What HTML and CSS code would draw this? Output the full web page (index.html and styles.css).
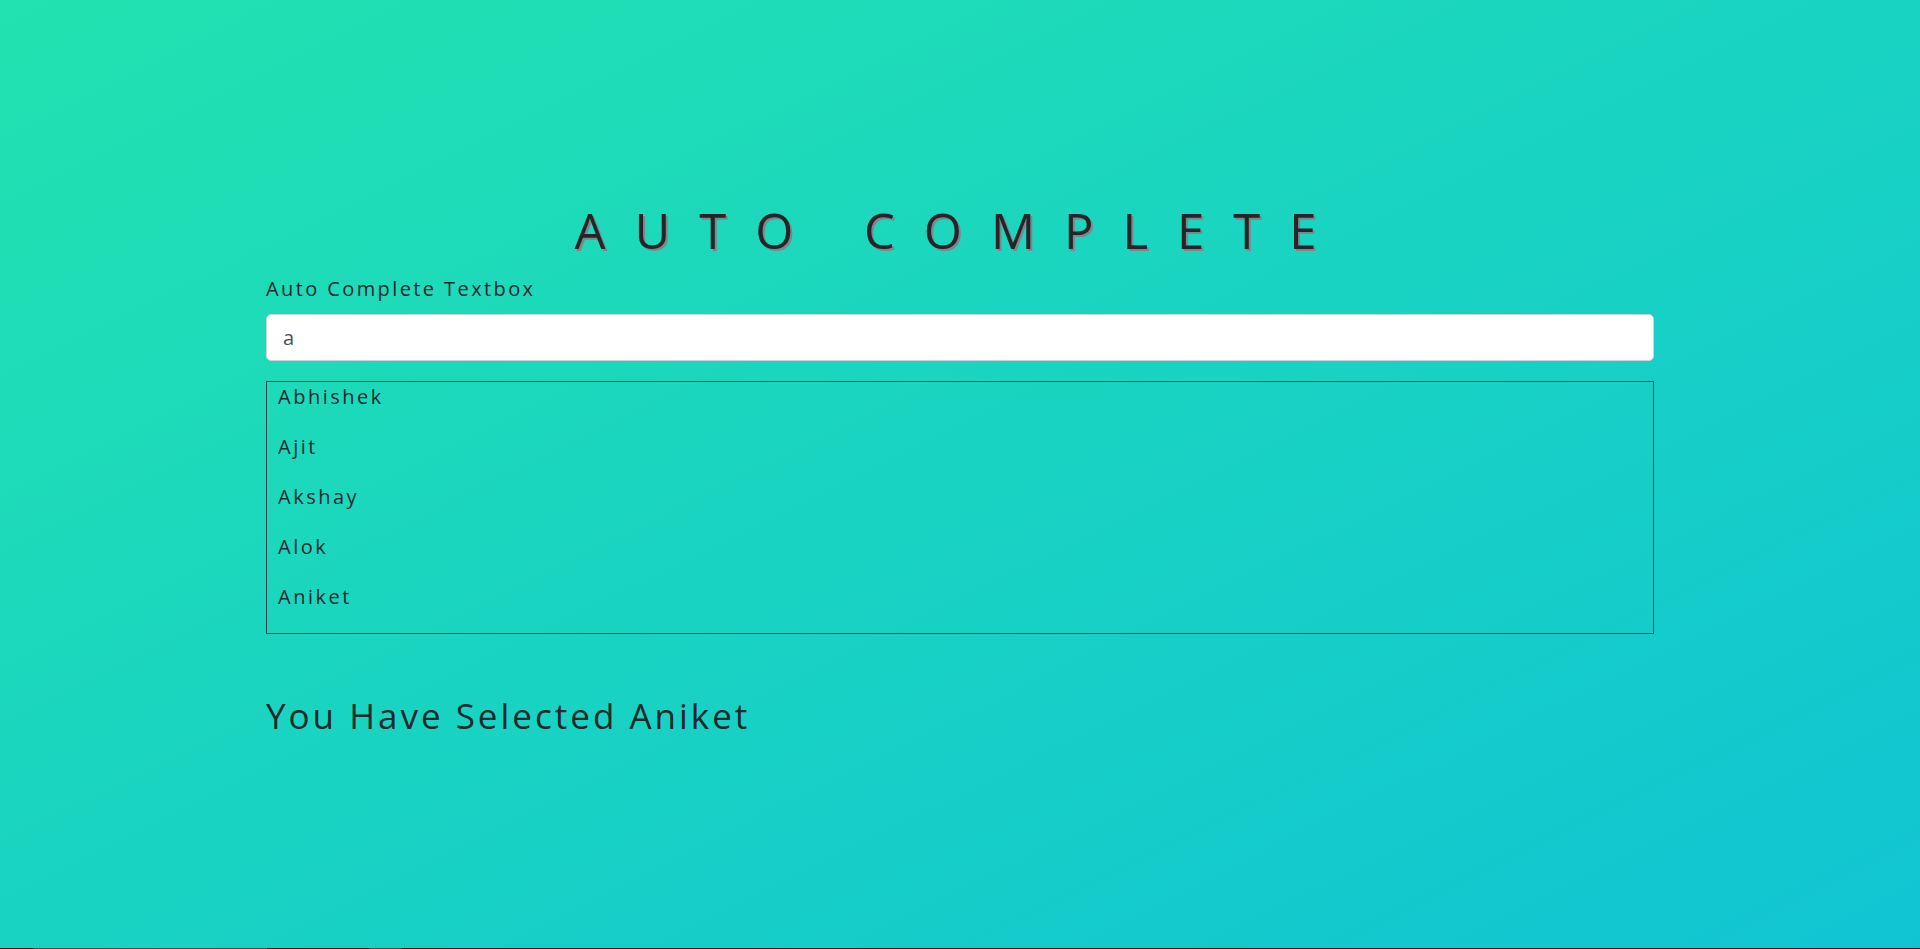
FILE: index.html
```html
<!DOCTYPE html>
<html lang="en">
<head>
<meta charset="utf-8">
<title>Auto Complete</title>
<link rel="stylesheet" href="styles.css">
</head>
<body>
<div class="page">
  <main class="container">
    <h1 class="title">Auto Complete</h1>
    <label class="label" for="name">Auto Complete Textbox</label>
    <input class="textbox" id="name" type="text" value="a">
    <ul class="suggestions">
      <li class="item">Abhishek</li>
      <li class="item">Ajit</li>
      <li class="item">Akshay</li>
      <li class="item">Alok</li>
      <li class="item">Aniket</li>
    </ul>
    <h2 class="selected">You Have Selected Aniket</h2>
  </main>
  <div class="edge">
    <span class="seg dark s1"></span>
    <span class="seg grey s2"></span>
    <span class="seg dark s3"></span>
    <span class="seg grey s4"></span>
    <span class="seg dark s5"></span>
  </div>
</div>
</body>
</html>
```
FILE: styles.css
```css
* { box-sizing: border-box; }
html, body { margin: 0; padding: 0; }
body {
  font-family: "Open Sans", "Noto Sans", sans-serif;
  background: linear-gradient(to bottom right, #22e2b0 0%, #19d3c2 50%, #11c4d3 100%);
  min-height: 949px;
  color: #1f2629;
}
.page {
  min-height: 949px;
  display: flex;
  flex-direction: column;
}
.container {
  width: 1388px;
  margin: 0 auto;
  padding-top: 201px;
  display: flex;
  flex-direction: column;
  flex: 1;
}
.title {
  margin: 0;
  font-size: 49px;
  line-height: 58px;
  font-weight: 400;
  text-transform: uppercase;
  letter-spacing: 29px;
  text-align: center;
  color: #23252b;
  text-shadow: 2px 2px 0 #80858a;
}
.label {
  margin-top: 18px;
  font-size: 20px;
  line-height: 24px;
  letter-spacing: 2.4px;
  color: #1e2a2c;
}
.textbox {
  margin-top: 13px;
  height: 47px;
  width: 100%;
  border: 1px solid #cfd3dc;
  border-radius: 5px;
  background: #fff;
  padding: 0 16px;
  font-family: "Open Sans", "Noto Sans", sans-serif;
  font-size: 20px;
  color: #4a4f5c;
  outline: none;
}
.suggestions {
  list-style: none;
  margin: 20px 0 0;
  padding: 3px 0 0 11px;
  height: 253px;
  border: 1px solid #27434d;
  overflow: hidden;
}
.item {
  font-size: 20px;
  line-height: 24px;
  height: 50px;
  letter-spacing: 2.5px;
  color: #1e2a2c;
}
.selected {
  margin: 61px 0 0;
  font-size: 35px;
  line-height: 42px;
  font-weight: 400;
  letter-spacing: 3px;
  color: #1e2a2c;
}
.edge {
  display: flex;
  height: 1px;
}
.seg { display: block; height: 1px; }
.dark { background: #1b1b1b; }
.grey { background: #505050; }
.s1 { width: 33px; }
.s2 { width: 234px; }
.s3 { width: 102px; }
.s4 { width: 33px; }
.s5 { flex: 1; }
```
